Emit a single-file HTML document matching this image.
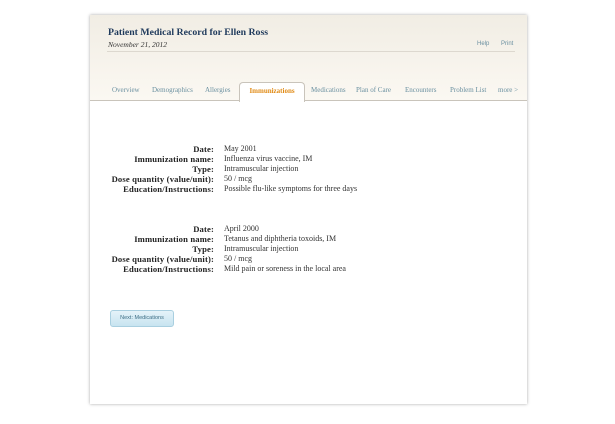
<!DOCTYPE html>
<html><head><style>
body{margin:0;background:#fff;width:615px;height:424px;position:relative;font-family:"Liberation Serif",serif;}
.card{position:absolute;left:90px;top:15px;width:437px;height:389px;background:#fff;box-shadow:0 0 3px rgba(0,0,0,.35);}
.hdr{position:absolute;left:0;top:0;width:437px;height:85px;background:linear-gradient(#f1ede4,#fbf8f2);border-bottom:1px solid #c9c4bb;}
.title{position:absolute;left:18px;top:12px;font-weight:bold;font-size:9.8px;color:#1f3a5c;}
.date{position:absolute;left:18px;top:25px;font-style:italic;font-size:7.5px;color:#333;}
.rule{position:absolute;left:17px;top:36px;width:408px;border-top:1px solid #ddd8cf;}
.links{position:absolute;top:26px;font-family:"Liberation Sans",sans-serif;font-size:6px;color:#6a8fa0;}
.tab{position:absolute;top:71px;font-size:7px;color:#6a90a0;}
.act{position:absolute;left:149px;top:67px;width:64px;height:19px;background:#fff;border:1px solid #c9c4bb;border-bottom:none;border-radius:4px 4px 0 0;text-align:center;font-size:7px;font-weight:bold;color:#e08a14;line-height:16px;}
.row{position:absolute;font-size:8px;line-height:10px;color:#222;white-space:nowrap;}
.l{right:313px;font-weight:bold;text-align:right;font-size:8.6px;letter-spacing:0.15px;}
.v{left:134px;color:#333;}
.btn{position:absolute;left:20px;top:295px;width:62px;height:15px;border:1px solid #a9cfe0;border-radius:3px;background:linear-gradient(#e5f3f9,#c7e4f0);font-family:"Liberation Sans",sans-serif;font-size:5.5px;color:#3f6f86;text-align:center;line-height:15px;}
</style></head><body>
<div class="card">
<div class="hdr">
<div class="title">Patient Medical Record for Ellen Ross</div>
<div class="date">November 21, 2012</div>
<div class="links" style="left:387px">Help</div>
<div class="links" style="left:411px">Print</div>
<div class="rule"></div>
<div class="tab" style="left:22px">Overview</div>
<div class="tab" style="left:62px">Demographics</div>
<div class="tab" style="left:115px">Allergies</div>
<div class="tab" style="left:221px">Medications</div>
<div class="tab" style="left:266px">Plan of Care</div>
<div class="tab" style="left:315px">Encounters</div>
<div class="tab" style="left:360px">Problem List</div>
<div class="tab" style="left:408px">more &gt;</div>
<div class="act">Immunizations</div>
</div>
<div class="row l" style="top:129px">Date:</div><div class="row v" style="top:129px">May 2001</div>
<div class="row l" style="top:139px">Immunization name:</div><div class="row v" style="top:139px">Influenza virus vaccine, IM</div>
<div class="row l" style="top:149px">Type:</div><div class="row v" style="top:149px">Intramuscular injection</div>
<div class="row l" style="top:159px">Dose quantity (value/unit):</div><div class="row v" style="top:159px">50 / mcg</div>
<div class="row l" style="top:169px">Education/Instructions:</div><div class="row v" style="top:169px">Possible flu-like symptoms for three days</div>
<div class="row l" style="top:209px">Date:</div><div class="row v" style="top:209px">April 2000</div>
<div class="row l" style="top:219px">Immunization name:</div><div class="row v" style="top:219px">Tetanus and diphtheria toxoids, IM</div>
<div class="row l" style="top:229px">Type:</div><div class="row v" style="top:229px">Intramuscular injection</div>
<div class="row l" style="top:239px">Dose quantity (value/unit):</div><div class="row v" style="top:239px">50 / mcg</div>
<div class="row l" style="top:249px">Education/Instructions:</div><div class="row v" style="top:249px">Mild pain or soreness in the local area</div>
<div class="btn">Next: Medications</div>
</div>
</body></html>
